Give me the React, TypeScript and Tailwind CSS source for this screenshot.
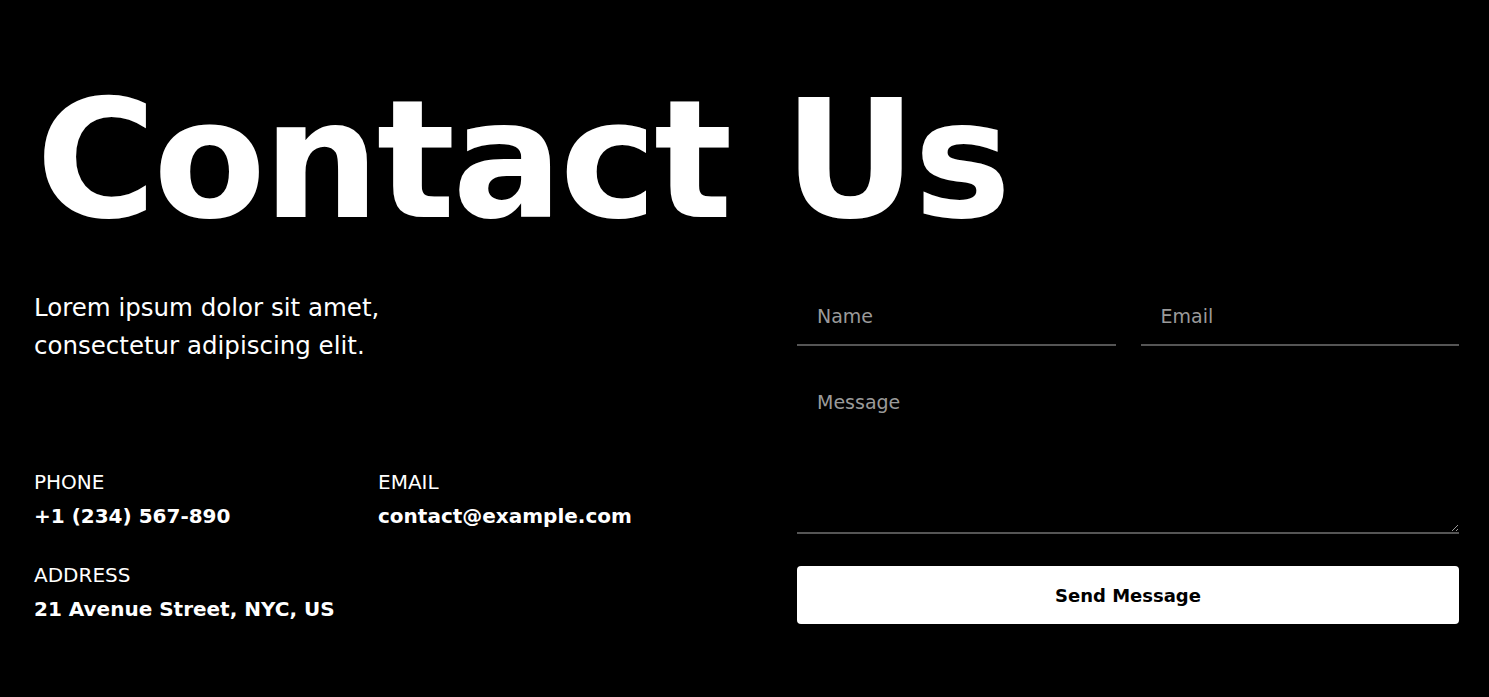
import React from 'react';

const font = { fontFamily: '"DejaVu Sans", "Open Sans", sans-serif' };

const InfoItem = ({ label, value }: { label: string; value: string }) => (
  <div className="flex flex-col">
    <span className="text-[20px] font-normal uppercase leading-[34px] text-white">{label}</span>
    <span className="text-[20px] font-bold leading-[34px] text-white">{value}</span>
  </div>
);

const fieldCls =
  'border-b-2 border-[#555] bg-transparent px-5 text-[19px] text-white outline-none placeholder:text-[#9a9a9a]';

export default function App() {
  return (
    <div
      className="min-h-[697px] w-full bg-black text-white pl-[34px] pr-[30px] pt-[76px]"
      style={font}
    >
      <h1 className="ml-[2px] text-[164px] font-bold leading-[170px] tracking-[-3px]">
        Contact Us
      </h1>

      <div className="mt-[41px] flex">
        <div className="w-[763px] shrink-0">
          <p className="mt-[2px] text-[24.5px] leading-[38px]">
            Lorem ipsum dolor sit amet,
            <br />
            consectetur adipiscing elit.
          </p>
          <div className="mt-[100px] grid grid-cols-[344px_1fr] gap-y-[25px]">
            <InfoItem label="Phone" value="+1 (234) 567-890" />
            <InfoItem label="Email" value="contact@example.com" />
            <InfoItem label="Address" value="21 Avenue Street, NYC, US" />
          </div>
        </div>

        <form className="flex w-[662px] flex-col" onSubmit={(e) => e.preventDefault()}>
          <div className="grid grid-cols-2 gap-[25px]">
            <input placeholder="Name" className={`h-[59px] ${fieldCls}`} />
            <input placeholder="Email" className={`h-[59px] ${fieldCls}`} />
          </div>
          <textarea
            placeholder="Message"
            className={`mt-[25px] h-[163px] py-[17px] ${fieldCls}`}
          />
          <button
            type="submit"
            className="mt-[32px] h-[58px] rounded-[4px] bg-white text-[18px] font-semibold text-black"
          >
            Send Message
          </button>
        </form>
      </div>
    </div>
  );
}
